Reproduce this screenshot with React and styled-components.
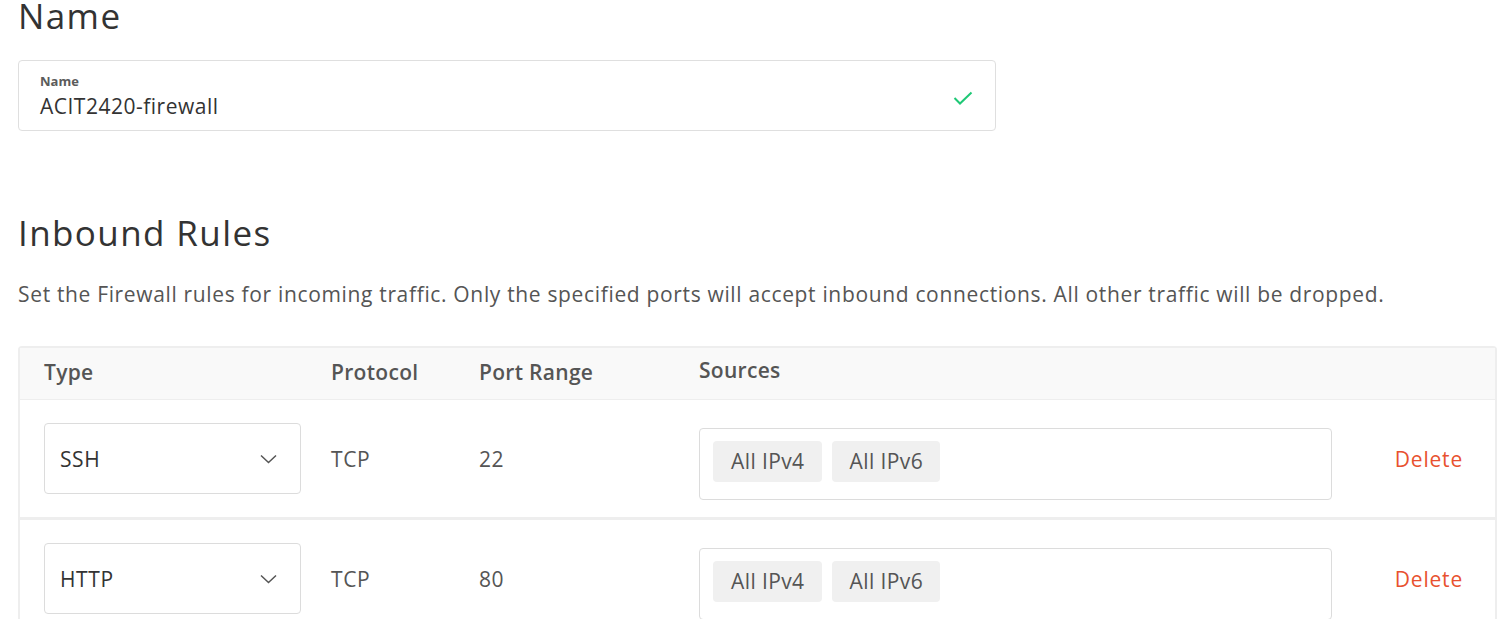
import styled, { createGlobalStyle } from "styled-components";

const Global = createGlobalStyle`
  body {
    margin: 0;
    background: #fff;
    font-family: "Open Sans", "Liberation Sans", sans-serif;
    color: #333;
  }
`;

const Page = styled.div`
  padding: 0 4px 0 18px;
`;

const Heading = styled.h2`
  margin: ${(p) => p.$top} 0 0;
  font-size: 35px;
  font-weight: 400;
  letter-spacing: 1.4px;
  line-height: 44px;
  color: #333;
`;

/* name field */
const Field = styled.div`
  width: 978px;
  height: 71px;
  margin-top: 22px;
  box-sizing: border-box;
  border: 1px solid #dfdfdf;
  border-radius: 4px;
  padding: 12px 22px 0 21px;
  display: flex;
  align-items: flex-start;
`;

const FieldText = styled.div`
  flex: 1;
`;

const FieldLabel = styled.div`
  font-size: 13px;
  font-weight: 700;
  color: #5b5b5b;
  line-height: 16px;
`;

const FieldValue = styled.div`
  margin-top: 4px;
  font-size: 21px;
  letter-spacing: 0.5px;
  color: #333;
  line-height: 26px;
`;

const CheckWrap = styled.div`
  margin-top: 16px;
`;

const Intro = styled.p`
  margin: 25px 0 0;
  font-size: 21px;
  letter-spacing: 0.66px;
  color: #555;
  line-height: 28px;
`;

/* rules table */
const Table = styled.div`
  margin-top: 38px;
  border: 2px solid #eeeeee;
  border-bottom: none;
  border-radius: 4px 4px 0 0;
`;

const Row = styled.div`
  display: grid;
  grid-template-columns: 287px 148px 220px 632px 1fr;
  align-items: center;
  padding: ${(p) => (p.$head ? "0 32px 4px 24px" : "0 32px 0 24px")};
  height: ${(p) => (p.$head ? "52px" : "117px")};
  box-sizing: ${(p) => (p.$head ? "border-box" : "content-box")};
  background: ${(p) => (p.$head ? "#f9f9f9" : "#fff")};
  border-bottom: ${(p) => (p.$head ? "1px solid #eee" : "3px solid #eee")};
`;

const HeadCell = styled.div`
  font-size: 21px;
  font-weight: 600;
  letter-spacing: 0.3px;
  color: #555;
  margin-top: ${(p) => p.$up || "0"};
`;

const Cell = styled.div`
  font-size: 21px;
  letter-spacing: 0.6px;
  color: #555;
`;

const Select = styled.div`
  width: 257px;
  height: 71px;
  box-sizing: border-box;
  border: 1px solid #dcdcdc;
  border-radius: 4px;
  display: flex;
  align-items: center;
  justify-content: space-between;
  padding: 0 23px 0 15px;
  font-size: 21px;
  letter-spacing: 0.6px;
  color: #333;
`;

const Sources = styled.div`
  width: 633px;
  height: 72px;
  margin-top: 10px;
  box-sizing: border-box;
  border: 1px solid #dcdcdc;
  border-radius: 4px;
  display: flex;
  align-items: flex-start;
  gap: 10px;
  padding: 12px 13px 0;
`;

const Chip = styled.span`
  display: inline-flex;
  align-items: center;
  height: 41px;
  padding: 0 17px 0 18px;
  background: #f0f0f0;
  border-radius: 4px;
  font-size: 21px;
  letter-spacing: 0.4px;
  color: #555;
`;

const Delete = styled.a`
  justify-self: end;
  font-size: 21px;
  letter-spacing: 0.8px;
  color: #e8512f;
  cursor: pointer;
`;

const Check = () => (
  <svg width="20" height="15" viewBox="0 0 20 15">
    <polyline points="1.5,7 7,12.5 18.5,1.5" fill="none" stroke="#1fc876" strokeWidth="2" />
  </svg>
);

const Chevron = () => (
  <svg width="17" height="10" viewBox="0 0 17 10">
    <polyline points="1,1.5 8.5,8.5 16,1.5" fill="none" stroke="#555" strokeWidth="1.5" />
  </svg>
);

const rules = [
  { type: "SSH", port: "22" },
  { type: "HTTP", port: "80" },
];

export default function App() {
  return (
    <Page>
      <Global />
      <Heading $top="-6px">Name</Heading>
      <Field>
        <FieldText>
          <FieldLabel>Name</FieldLabel>
          <FieldValue>ACIT2420-firewall</FieldValue>
        </FieldText>
        <CheckWrap>
          <Check />
        </CheckWrap>
      </Field>
      <Heading $top="80px">Inbound Rules</Heading>
      <Intro>
        Set the Firewall rules for incoming traffic. Only the specified ports will accept inbound
        connections. All other traffic will be dropped.
      </Intro>
      <Table>
        <Row $head>
          <HeadCell>Type</HeadCell>
          <HeadCell>Protocol</HeadCell>
          <HeadCell>Port Range</HeadCell>
          <HeadCell $up="-4px">Sources</HeadCell>
          <div />
        </Row>
        {rules.map((r) => (
          <Row key={r.type}>
            <Select>
              {r.type}
              <Chevron />
            </Select>
            <Cell>TCP</Cell>
            <Cell>{r.port}</Cell>
            <Sources>
              <Chip>All IPv4</Chip>
              <Chip>All IPv6</Chip>
            </Sources>
            <Delete>Delete</Delete>
          </Row>
        ))}
      </Table>
    </Page>
  );
}
